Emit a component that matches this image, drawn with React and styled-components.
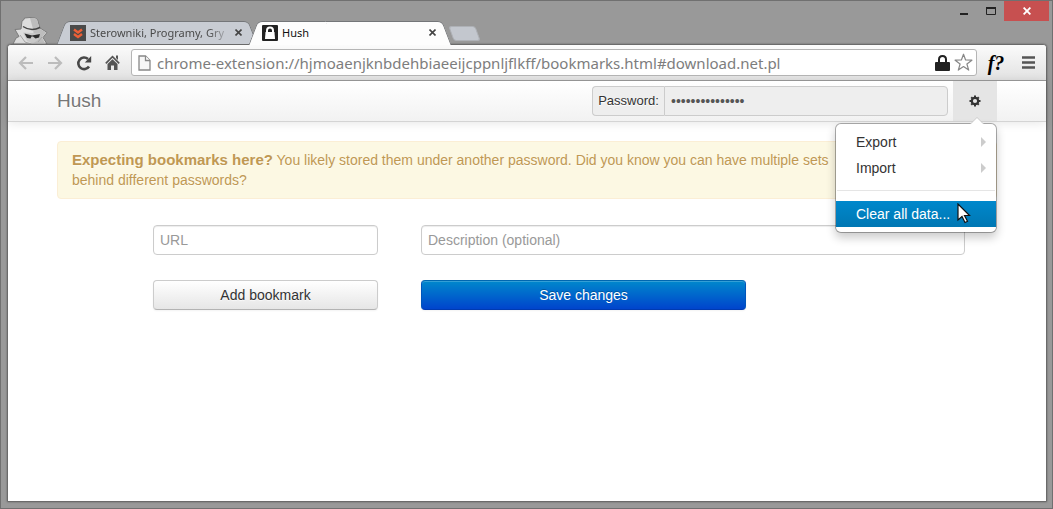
import React from 'react'
import styled, { createGlobalStyle, css } from 'styled-components'

const GlobalStyle = createGlobalStyle`
  * {
    box-sizing: border-box;
  }
  body {
    margin: 0;
    color: #333;
    font-family: 'Liberation Sans', Arial, sans-serif;
    font-size: 14px;
    line-height: 20px;
  }
  button, input {
    margin: 0;
    font: inherit;
  }
`

/* Browser window */

const Window = styled.div`
  display: flex;
  flex-direction: column;
  min-height: 100vh;
  background: #999;
  border: 1px solid #707070;
`

const TitleBar = styled.header`
  display: flex;
  height: 43px;
  padding: 0 3px 0 11px;
`

const Spy = styled.svg`
  flex: none;
  align-self: flex-end;
  width: 37px;
  height: 28px;
`

const TabStrip = styled.div`
  display: flex;
  flex: 1;
  align-items: flex-end;
  min-width: 0;
  padding-left: 12px;
`

const Tab = styled.div`
  position: relative;
  z-index: ${props => (props.$active ? 1 : 0)};
  isolation: isolate;
  display: flex;
  align-items: center;
  width: ${props => (props.$active ? '194px' : '192px')};
  height: 23px;
  padding: 0 8px 0 9px;
`

const tabColor = props => (props.$active ? '#fdfdfd' : '#c8ccd3')

const TabShape = styled.div`
  position: absolute;
  z-index: -1;
  top: 0;
  bottom: ${props => (props.$active ? '-1px' : 0)};
  left: 0;
  right: 0;
  &:before,
  &:after {
    position: absolute;
    top: 0;
    bottom: 0;
    width: 60%;
    content: '';
    background: ${tabColor};
    border-top: 1px solid #747679;
  }
  &:before {
    left: 0;
    border-left: 1px solid #747679;
    border-top-left-radius: 5px;
    transform: skewX(-21deg);
  }
  &:after {
    right: 0;
    border-right: 1px solid #747679;
    border-top-right-radius: 5px;
    transform: skewX(21deg);
  }
`

const TabTitle = styled.span`
  flex: 1;
  min-width: 0;
  margin-left: 4px;
  overflow: hidden;
  color: ${props => (props.$active ? '#111' : '#4a4a4a')};
  font: 11px/20px 'Noto Sans', 'Open Sans', sans-serif;
  white-space: nowrap;
  ${props => !props.$active && css`
    mask-image: linear-gradient(to right, #000 84%, transparent);
  `}
`

const IconButton = styled.button`
  display: flex;
  flex: none;
  align-items: center;
  justify-content: center;
  width: ${props => props.$width}px;
  height: ${props => props.$height}px;
  padding: 0;
  color: #484848;
  background: ${props => props.$color || 'none'};
  border: 0;
`

const NewTab = styled.button`
  width: 27px;
  height: 15px;
  margin: 0 0 3px 4px;
  padding: 0;
  background: #c3c7ce;
  border: 1px solid #aeb1b6;
  border-radius: 3px;
  transform: skewX(20deg);
`

const Frame = styled.div`
  display: flex;
  flex: 1;
  flex-direction: column;
  margin: 0 5px 6px 6px;
  background: #fff;
  border: 1px solid #6a6a6a;
  border-radius: 4px 4px 0 0;
  box-shadow: 0 0 2px rgba(0, 0, 0, 0.4);
`

const Toolbar = styled.div`
  display: flex;
  align-items: center;
  height: 36px;
  padding: 0 5px 0 3px;
  background: linear-gradient(#fbfbfb, #e2e2e2);
  border-bottom: 1px solid #9b9b9b;
  border-radius: 3px 3px 0 0;
`

const AddressBar = styled.div`
  display: flex;
  flex: 1;
  align-items: center;
  height: 27px;
  min-width: 0;
  margin: 0 0 0 4px;
  padding: 0 0 0 6px;
  background: #fff;
  border: 1px solid #b5b5b5;
  border-radius: 3px;
`

const Address = styled.input`
  flex: 1;
  min-width: 0;
  padding: 0 0 0 6px;
  color: #7d7d7d;
  font: 15px/22px 'Noto Sans', 'Open Sans', sans-serif;
  background: none;
  border: 0;
  outline: 0;
`

const Extension = styled(IconButton)`
  color: #000;
  font: italic bold 20px/24px 'Liberation Serif', serif;
`

/* Page */

const Container = styled.div`
  max-width: 940px;
  margin: 0 auto;
`

const Navbar = styled.nav`
  background: linear-gradient(#fff, #f2f2f2);
  border-bottom: 1px solid #d4d4d4;
  box-shadow: 0 1px 10px rgba(0, 0, 0, 0.1);
`

const NavInner = styled(Container)`
  display: flex;
  align-items: center;
  height: 40px;
`

const Brand = styled.a`
  margin-right: auto;
  color: #777;
  font-size: 19px;
  text-decoration: none;
  text-shadow: 0 1px 0 #fff;
`

const PasswordForm = styled.form`
  display: flex;
  width: 356px;
  margin-right: 5px;
`

const AddOn = styled.label`
  width: 72px;
  height: 30px;
  padding: 4px 0;
  font-size: 13px;
  text-align: center;
  text-shadow: 0 1px 0 #fff;
  background: #eee;
  border: 1px solid #ccc;
  border-right: 0;
  border-radius: 4px 0 0 4px;
`

const Input = styled.input`
  width: 100%;
  height: 30px;
  padding: 4px 6px;
  color: #555;
  background: #fff;
  border: 1px solid #ccc;
  border-radius: 4px;
  box-shadow: inset 0 1px 1px rgba(0, 0, 0, 0.075);
  outline: 0;
  &::placeholder {
    color: #999;
    opacity: 1;
  }
`

const PasswordInput = styled(Input)`
  flex: 1;
  min-width: 0;
  background: #eee;
  border-radius: 0 4px 4px 0;
  box-shadow: none;
`

const Settings = styled.div`
  position: relative;
`

const Menu = styled.ul`
  position: absolute;
  z-index: 10;
  top: 42px;
  right: 0;
  width: 162px;
  margin: 0;
  padding: 5px 0;
  list-style: none;
  background: #fff;
  background-clip: padding-box;
  border: 1px solid rgba(0, 0, 0, 0.3);
  border-radius: 6px;
  box-shadow: 0 5px 10px rgba(0, 0, 0, 0.2);
  &:before,
  &:after {
    position: absolute;
    content: '';
    border: solid transparent;
  }
  &:before {
    top: -7px;
    right: 12px;
    border-width: 0 7px 7px;
    border-bottom-color: #ccc;
  }
  &:after {
    top: -6px;
    right: 13px;
    border-width: 0 6px 6px;
    border-bottom-color: #fff;
  }
`

const MenuLink = styled.a`
  display: flex;
  align-items: center;
  justify-content: space-between;
  padding: 3px 10px 3px 20px;
  color: ${props => (props.$selected ? '#fff' : '#333')};
  text-decoration: none;
  ${props => props.$selected && css`
    background: linear-gradient(#0088cc, #0077b3);
  `}
  ${props => props.$submenu && css`
    &:after {
      content: '';
      border: 5px solid transparent;
      border-right-width: 0;
      border-left-color: #ccc;
    }
  `}
`

const Divider = styled.li`
  height: 1px;
  margin: 9px 1px 10px;
  background: #e5e5e5;
`

const Pointer = styled.svg`
  position: absolute;
  right: 25px;
  bottom: 7px;
  width: 14px;
  height: 22px;
`

const Alert = styled.div`
  margin: 19px 0 26px;
  padding: 8px 150px 8px 14px;
  color: #c09853;
  text-shadow: 0 1px 0 rgba(255, 255, 255, 0.5);
  background: #fcf8e3;
  border: 1px solid #fbeed5;
  border-radius: 4px;
  strong {
    font-size: 15px;
    line-height: 1;
  }
`

const BookmarkForm = styled.form`
  display: grid;
  grid-template-columns: minmax(0, 225px) minmax(0, 544px);
  gap: 25px 43px;
  padding-left: 96px;
`

const Button = styled.button`
  width: 100%;
  max-width: 325px;
  height: 30px;
  padding: 4px 12px;
  color: #333;
  text-shadow: 0 1px 1px rgba(255, 255, 255, 0.75);
  background: linear-gradient(#fff, #e6e6e6);
  border: 1px solid #ccc;
  border-bottom-color: #b3b3b3;
  border-radius: 4px;
  box-shadow: inset 0 1px 0 rgba(255, 255, 255, 0.2), 0 1px 2px rgba(0, 0, 0, 0.05);
  ${props => props.$primary && css`
    color: #fff;
    text-shadow: 0 -1px 0 rgba(0, 0, 0, 0.25);
    background: linear-gradient(#0088cc, #0044cc);
    border-color: #0067b0 #0055bb #003ab0;
  `}
`

const SpyIcon = () => (
  <Spy viewBox="0 0 37 28">
    <path
      d="M1 28 4 22 7 20.500 3 13.500 9 13 10 5 12 3.500 12.500 2 18 1.500 23 2 25.500 3.500 28 12 35 16.500 31 21.500 35 28Z"
      fill="#dcdcdc"
      stroke="#7c7c7c"
      strokeLinejoin="round"
    />
    <path d="M18 2h5l2 1.500 2.500 9 6.500 4-4 5 3.500 6.500H19l3-8-1-7Z" fill="#bdbdbd" />
    <path d="M11 16.500 28 17.500 26 24 21 27.500 15 25Z" fill="#c9c9c9" />
    <path d="M11 10.500Q19 16 28 11.500" fill="none" stroke="#444" strokeWidth="1.400" />
    <path d="M12.500 17.500 20 19.500 28 18 27 21.500 23.500 22.500 21 20.500 19.500 20.500 18.500 22.500 15 22Z" fill="#2b2b2b" />
    <path d="m8 19 5 7 6 2M30 21l-4 5" fill="none" stroke="#a5a5a5" />
  </Spy>
)

const ChevronsIcon = () => (
  <svg width="16" height="16">
    <path d="M0 0h16v16H0z" fill="#4a4a4a" />
    <path d="m4 4.500 4 3 4-3M4 9l4 3 4-3" fill="none" stroke="#ee5f36" strokeWidth="2.400" />
  </svg>
)

const HushIcon = () => (
  <svg width="16" height="16">
    <rect width="16" height="16" rx="1" fill="#222" />
    <path d="M5 8V5.500q0-3 3-3t3 3V8" fill="none" stroke="#fff" strokeWidth="2" />
    <path d="M3.500 7h9l.5 7H3z" fill="#fff" />
  </svg>
)

const CloseIcon = ({ size = 7, color = '#444' }) => (
  <svg width={size} height={size} viewBox="0 0 7 7">
    <path d="m.5.5 6 6m0-6-6 6" stroke={color} strokeWidth="1.600" />
  </svg>
)

const ArrowIcon = ({ flip }) => (
  <svg width="16" height="14" viewBox="0 0 16 14">
    <path
      d="M15 7H2M8 1 2 7l6 6"
      fill="none"
      stroke="#bcbcbc"
      strokeWidth="2.200"
      transform={flip ? 'translate(16 0) scale(-1 1)' : undefined}
    />
  </svg>
)

const ReloadIcon = () => (
  <svg width="16" height="16" viewBox="0 0 16 16">
    <path d="M13 11.500A5.800 5.800 0 1 1 12 4" fill="none" stroke="#484848" strokeWidth="2.600" />
    <path d="M15.200 1v6.500H8.800Z" fill="#484848" />
  </svg>
)

const HomeIcon = () => (
  <svg width="15" height="15" viewBox="0 0 15 15">
    <path d="m.8 8.300 6.700-6.600 6.700 6.600" fill="none" stroke="#555" strokeWidth="1.700" />
    <path d="M11 .5h2V5l-2-2ZM7.500 4.200 2.500 9v6H6v-4.500h3V15h3.500V9Z" fill="#555" />
  </svg>
)

const PageIcon = () => (
  <svg width="13" height="16">
    <path d="M1 1h6.500L12 5.500V15H1Z" fill="#f6f6f6" stroke="#888" strokeWidth="1.300" />
    <path d="M7.500 1v4.500H12" fill="#fff" stroke="#888" strokeWidth="1.300" />
  </svg>
)

const LockIcon = () => (
  <svg width="15" height="18">
    <path d="M4 9V5.500Q4 2 7.500 2T11 5.500V9" fill="none" stroke="#222" strokeWidth="2" />
    <rect y="8" width="15" height="9" rx="1" fill="#222" />
  </svg>
)

const StarIcon = () => (
  <svg width="19" height="19" viewBox="0 0 19 19">
    <path
      d="m9.500 1.200 2.100 5.800 6.300.2-5 3.800 1.800 6.100-5.200-3.500-5.200 3.500 1.800-6.100-5-3.800 6.300-.2Z"
      fill="#fff"
      stroke="#888"
      strokeWidth="1.200"
      strokeLinejoin="round"
    />
  </svg>
)

const BarsIcon = () => (
  <svg width="13" height="13">
    <path d="M0 1.500h13M0 6.500h13M0 11.500h13" stroke="#555" strokeWidth="2.600" />
  </svg>
)

const GearIcon = () => (
  <svg width="12" height="12" viewBox="-6 -6 12 12">
    <circle r="3.200" fill="none" stroke="#333" strokeWidth="2.200" />
    <path
      d="M0-5.500v2M0 5.500v-2M-5.500 0h2M5.500 0h-2M-3.800-3.800l1.200 1.200M3.800 3.800 2.600 2.600M-3.800 3.800l1.200-1.200M3.800-3.800 2.600-2.600"
      stroke="#333"
      strokeWidth="2"
    />
  </svg>
)

const BrowserTab = ({ icon, title, active }) => (
  <Tab $active={active}>
    <TabShape $active={active} />
    {icon}
    <TabTitle $active={active}>{title}</TabTitle>
    <IconButton $width={14} $height={14} aria-label="Close tab">
      <CloseIcon />
    </IconButton>
  </Tab>
)

const SettingsMenu = () => (
  <Settings>
    <IconButton $width={44} $height={40} $color="#e5e5e5" aria-label="Settings">
      <GearIcon />
    </IconButton>
    <Menu>
      <li><MenuLink href="#export" $submenu>Export</MenuLink></li>
      <li><MenuLink href="#import" $submenu>Import</MenuLink></li>
      <Divider />
      <li>
        <MenuLink href="#clear" $selected>Clear all data...</MenuLink>
        <Pointer viewBox="0 0 14 22">
          <path d="M1 1v16l4-3.500 3 6 2.500-1.300-3-5.700h5Z" fill="#fff" stroke="#111" strokeWidth="1.200" />
        </Pointer>
      </li>
    </Menu>
  </Settings>
)

const App = () => (
  <>
    <GlobalStyle />
    <Window>
      <TitleBar>
        <SpyIcon />
        <TabStrip>
          <BrowserTab icon={<ChevronsIcon />} title="Sterowniki, Programy, Gry" />
          <BrowserTab icon={<HushIcon />} title="Hush" active />
          <NewTab aria-label="New tab" />
        </TabStrip>
        <IconButton $width={27} $height={20} aria-label="Minimize">
          <svg width="8" height="10"><path d="M0 7h8v2H0z" fill="#222" /></svg>
        </IconButton>
        <IconButton $width={27} $height={20} aria-label="Maximize">
          <svg width="10" height="8"><path d="M.5 1h9v6.500h-9Z" fill="none" stroke="#222" /><path d="M0 0h10v2H0z" fill="#222" /></svg>
        </IconButton>
        <IconButton $width={45} $height={20} $color="#c75050" aria-label="Close">
          <CloseIcon size={8} color="#fff" />
        </IconButton>
      </TitleBar>
      <Frame>
        <Toolbar>
          <IconButton $width={29} $height={28} aria-label="Back"><ArrowIcon /></IconButton>
          <IconButton $width={29} $height={28} aria-label="Forward"><ArrowIcon flip /></IconButton>
          <IconButton $width={29} $height={28} aria-label="Reload"><ReloadIcon /></IconButton>
          <IconButton $width={29} $height={28} aria-label="Home"><HomeIcon /></IconButton>
          <AddressBar>
            <PageIcon />
            <Address
              aria-label="Address"
              defaultValue="chrome-extension://hjmoaenjknbdehbiaeeijcppnljflkff/bookmarks.html#download.net.pl"
            />
            <LockIcon />
            <IconButton $width={26} $height={22} aria-label="Bookmark this page"><StarIcon /></IconButton>
          </AddressBar>
          <Extension $width={38} $height={28}>f?</Extension>
          <IconButton $width={26} $height={28} aria-label="Menu"><BarsIcon /></IconButton>
        </Toolbar>
        <Navbar>
          <NavInner>
            <Brand href="#">Hush</Brand>
            <PasswordForm>
              <AddOn htmlFor="password">Password:</AddOn>
              <PasswordInput id="password" type="password" defaultValue="correcthorsebat" />
            </PasswordForm>
            <SettingsMenu />
          </NavInner>
        </Navbar>
        <main>
          <Container>
            <Alert>
              <strong>Expecting bookmarks here?</strong> You likely stored them under another password.
              Did you know you can have multiple sets behind different passwords?
            </Alert>
            <BookmarkForm>
              <Input aria-label="URL" placeholder="URL" />
              <Input aria-label="Description" placeholder="Description (optional)" />
              <Button type="button">Add bookmark</Button>
              <Button type="button" $primary>Save changes</Button>
            </BookmarkForm>
          </Container>
        </main>
      </Frame>
    </Window>
  </>
)

export default App
